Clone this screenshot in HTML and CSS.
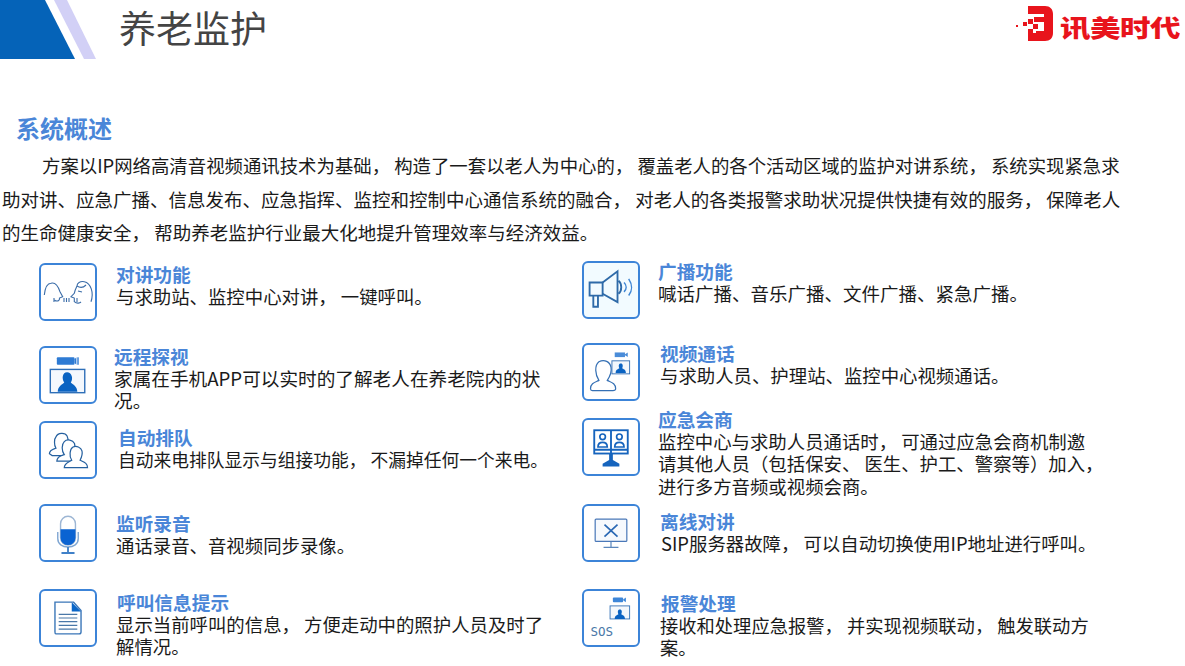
FILE: index.html
```html
<!DOCTYPE html>
<html lang="zh-CN">
<head>
<meta charset="utf-8">
<title>养老监护</title>
<link rel="stylesheet" href="styles.css">
</head>
<body>
<header class="top">
  <svg class="corner" viewBox="0 0 96 59" width="96" height="59"><polygon points="0,0 45,0 75,59 0,59" fill="#0563b8"/><polygon points="54,0 67,0 96,59 84,59" fill="#d2d0f6"/></svg>
  <h1 class="page-title">养老监护</h1>
  <div class="logo">
    <svg viewBox="0 0 38 36" width="38" height="36"><path d="M12 0H29C34 0 37 3 37 8V27C37 32 34 35 29 35H12V27H28V8H12Z" fill="#e8141c"/><path d="M18 11h10v5H18zM12 13h5v5h-5zM7 16h4v4H7zM17 18h5v5h-5zM12 23h5v4h-5zM20 25h8v3h-8zM0 19h2v2H0z" fill="#e8141c"/></svg>
    <span class="logo-text">讯美时代</span>
  </div>
</header>
<main>
  <h2 class="section-title">系统概述</h2>
  <p class="intro"><span class="intro-first">方案以IP网络高清音视频通讯技术为基础， 构造了一套以老人为中心的， 覆盖老人的各个活动区域的监护对讲系统， 系统实现紧急求</span><br>助对讲、应急广播、信息发布、应急指挥、监控和控制中心通信系统的融合， 对老人的各类报警求助状况提供快捷有效的服务， 保障老人<br>的生命健康安全， 帮助养老监护行业最大化地提升管理效率与经济效益。</p>
  <div class="features">
    <div class="col col-left">
      <div class="item i1">
        <div class="icon"><svg viewBox="0 0 54 54"><g fill="none" stroke="#3a6ca8" stroke-width="1.100"><path d="M3.300 30C4 24 6 18.300 10 18.300C14 17 17 21 19 26.700L21.700 31.700L18.500 33C19 36 16 37 13.300 35"/><path d="M13 37V33M23 37V33M25.500 37V33"/><path d="M50 36.700C53 28 50 18 43.300 16.700C39 16 36 18 36 21C34 25 33.500 27 33.300 28.300L30 31.700L33.300 33V36.700C36 39 39 38 40 37"/><path d="M36 21C39 23 42 23 45 20M37 26L41 27M28 37V33M36 37V33"/></g></svg></div>
        <div class="text"><h3>对讲功能</h3><p>与求助站、监控中心对讲， 一键呼叫。</p></div>
      </div>
      <div class="item i2">
        <div class="icon"><svg viewBox="0 0 58 58"><rect x="17" y="10" width="19" height="8" rx="1" fill="#2e7bd4"/><path d="M36 12L38 10V18L36 16Z" fill="#2e7bd4"/><rect x="39" y="10" width="1.500" height="8" fill="#2e7bd4"/><rect x="10" y="23" width="37" height="25" fill="#f4f8fd" stroke="#2e6fb8" stroke-width="1.500"/><path d="M18 47C18 41 23 39 25 37C22 33 23 26 28 26C33 26 35 33 32 37C34 39 39 41 39 47Z" fill="#0a63c2"/></svg></div>
        <div class="text"><h3>远程探视</h3><p>家属在手机APP可以实时的了解老人在养老院内的状<br>况。</p></div>
      </div>
      <div class="item i3">
        <div class="icon"><svg viewBox="0 0 58 58"><g fill="#fff" stroke="#25609f" stroke-width="1.300"><path d="M9 33C9 29 13 28 16 27C14 24 14 17 16 15C18 10 26 10 28 14C30 18 29 24 27 27L30 35H12Z"/><path d="M17 41C17 36 22 35 25 34C22 30 22 23 25 20C28 17 34 18 36 22C37 26 36 30 34 33L38 41Z"/><path d="M25 48C25 43 30 42 33 40C30 36 31 28 34 26C38 24 43 26 44 30C45 34 43 38 42 40C46 42 50 43 50 48Z"/></g></svg></div>
        <div class="text"><h3>自动排队</h3><p>自动来电排队显示与组接功能， 不漏掉任何一个来电。</p></div>
      </div>
      <div class="item i4">
        <div class="icon"><svg viewBox="0 0 58 58"><rect x="21" y="11" width="16" height="31" rx="8" fill="#fff" stroke="#9db6d4" stroke-width="1.500"/><path d="M21 25H37V34A8 8 0 0 1 21 34Z" fill="#0a63d2"/><path d="M18 28V35C18 41 23 44 29 44C35 44 40 41 40 35V28" fill="none" stroke="#7fa6d2" stroke-width="1.500"/><path d="M29 44V50M22 50.500H36" stroke="#3f80c8" stroke-width="2" fill="none"/></svg></div>
        <div class="text"><h3>监听录音</h3><p>通话录音、音视频同步录像。</p></div>
      </div>
      <div class="item i5">
        <div class="icon"><svg viewBox="0 0 58 58"><path d="M15 12H35L43 21V44C43 45 42 46 41 46H16C15 46 15 45 15 44Z" fill="#fff" stroke="#3a76b8" stroke-width="1.500"/><path d="M33 12L43 22H33Z" fill="#0a66c8"/><path d="M19 25H39M19 29H39M19 33H39M19 37H39M19 41H39" stroke="#4a78a8" stroke-width="1.300"/></svg></div>
        <div class="text"><h3>呼叫信息提示</h3><p>显示当前呼叫的信息， 方便走动中的照护人员及时了<br>解情况。</p></div>
      </div>
    </div>
    <div class="col col-right">
      <div class="item r1">
        <div class="icon tinted"><svg viewBox="0 0 58 58"><g fill="none" stroke="#2e6aa8" stroke-width="2"><path d="M6 21H20V35H6Z"/><path d="M20 21L36 9V42L20 33"/><path d="M10 35V47H15V35"/><path d="M37 19C41 22 41 30 37 33"/></g><g fill="none" stroke="#3f86d4" stroke-width="1.600"><path d="M43 21C46 24 46 28 43 31"/><path d="M48 17C52 23 52 30 48 35"/></g></svg></div>
        <div class="text"><h3>广播功能</h3><p>喊话广播、音乐广播、文件广播、紧急广播。</p></div>
      </div>
      <div class="item r2">
        <div class="icon"><svg viewBox="0 0 58 58"><path d="M7 47C7 41 12 40 16 38C12 32 11 22 16 18C22 15 28 18 29 24C30 29 27 35 25 38C29 40 34 41 34 47C34 49 33 49 31 49H9C8 49 7 49 7 47Z" fill="#fff" stroke="#3570b4" stroke-width="1.300"/><rect x="33" y="8" width="11" height="5" fill="#4a8cd8"/><path d="M44 10L47 8V13L44 11Z" fill="#4a8cd8"/><rect x="30" y="17" width="19" height="14" fill="#f2f7fc" stroke="#3570b4"/><path d="M34 30C34 26 37 26 38 25C37 23 37 20 39.500 20C42 20 42 23 41 25C42 26 45 26 45 30Z" fill="#0a63c2"/></svg></div>
        <div class="text"><h3>视频通话</h3><p>与求助人员、护理站、监控中心视频通话。</p></div>
      </div>
      <div class="item r3">
        <div class="icon"><svg viewBox="0 0 58 58"><rect x="11" y="11" width="36" height="25" fill="none" stroke="#1664bd" stroke-width="2"/><path d="M29 11V36M11 32H47" stroke="#1664bd" stroke-width="2"/><g fill="none" stroke="#1664bd" stroke-width="1.800"><circle cx="20" cy="18" r="3"/><circle cx="38" cy="18" r="3"/><path d="M15 29C15 25 17 24 20 24C23 24 25 25 25 29Z"/><path d="M33 29C33 25 35 24 38 24C41 24 43 25 43 29Z"/></g><path d="M27 36H31V43L38 47V50H20V47L27 43Z" fill="#1664bd"/></svg></div>
        <div class="text"><h3>应急会商</h3><p>监控中心与求助人员通话时， 可通过应急会商机制邀<br>请其他人员（包括保安、 医生、护工、警察等）加入，<br>进行多方音频或视频会商。</p></div>
      </div>
      <div class="item r4">
        <div class="icon"><svg viewBox="0 0 58 58"><rect x="12" y="14" width="34" height="24" rx="1" fill="#f6f9fd" stroke="#4a78b8" stroke-width="1.300"/><path d="M22 20L36 33M36 20L22 33" stroke="#2a68b4" stroke-width="1.800"/><path d="M29 38V44M21 44.500H37" stroke="#5a86bc" stroke-width="1.300"/></svg></div>
        <div class="text"><h3>离线对讲</h3><p>SIP服务器故障， 可以自动切换使用IP地址进行呼叫。</p></div>
      </div>
      <div class="item r5">
        <div class="icon"><svg viewBox="0 0 58 58"><rect x="31" y="7" width="11" height="5" rx="1" fill="#3d86d8"/><path d="M42 9L45 7V12L42 10Z" fill="#3d86d8"/><rect x="28" y="16" width="21" height="14" fill="#f4f8fc" stroke="#3a76b8"/><path d="M33 30C33 26 36 26 37 25C36 23 36 20 38.500 20C41 20 41 23 40 25C41 26 44 26 44 30Z" fill="#0a63c2"/><text x="7" y="48" class="sos">SOS</text></svg></div>
        <div class="text"><h3>报警处理</h3><p>接收和处理应急报警， 并实现视频联动， 触发联动方<br>案。</p></div>
      </div>
    </div>
  </div>
</main>
</body>
</html>
```
FILE: styles.css
```css
* { box-sizing: border-box; }
html, body { margin: 0; padding: 0; }
body {
  width: 1185px;
  height: 666px;
  overflow: hidden;
  background: #fff;
  color: #1a1a1a;
  font-family: "Noto Sans CJK SC", "Noto Sans", sans-serif;
}
.top { display: flex; align-items: flex-start; height: 59px; }
.corner { display: block; flex: none; }
.page-title {
  margin: 0 0 0 23px;
  font-size: 37px;
  line-height: 54px;
  font-weight: 400;
  color: #444;
}
.logo {
  margin-left: auto;
  margin-right: 5px;
  margin-top: 6px;
  display: flex;
  align-items: flex-start;
  gap: 6px;
}
.logo svg { display: block; }
.logo-text {
  margin-top: 3px;
  color: #e8141c;
  font-size: 30.500px;
  line-height: 36px;
  font-weight: 900;
  letter-spacing: -0.500px;
  transform: scaleY(0.78);
}
.section-title {
  margin: 53px 0 0 16px;
  font-size: 24px;
  line-height: 32px;
  font-weight: 700;
  color: #4a86d8;
}
.intro {
  margin: 5px 0 0 2px;
  font-size: 18.500px;
  line-height: 33.500px;
  text-indent: 40px;
  white-space: nowrap;
}
.intro-first { font-size: 18.400px; }
.features { display: flex; margin-top: 0; }
.col { display: flex; flex-direction: column; flex: none; }
.col-left { width: 582px; padding-left: 39px; padding-top: 13px; }
.col-right { padding-top: 11px; }
.item { display: flex; height: 58px; flex: none; }
.icon {
  flex: none;
  width: 58px;
  height: 58px;
  border: 2px solid #3c84d8;
  border-radius: 6px;
  background: #fff;
}
.icon.tinted { background: #f2fbff; }
.icon svg { display: block; width: 54px; height: 54px; }
.sos { font-family: "DejaVu Sans Mono", monospace; font-size: 13.500px; fill: #4a78a8; }
.text { white-space: nowrap; }
.text h3 {
  margin: 0;
  font-size: 18.700px;
  line-height: 22px;
  font-weight: 700;
  color: #4a86d8;
}
.text p { margin: 0; font-size: 18.400px; line-height: 22.500px; }

.i2 { margin-top: 25px; height: 59px; }
.i3 { margin-top: 16px; }
.i4 { margin-top: 25px; }
.i5 { margin-top: 27px; }
.r2 { margin-top: 24px; }
.r3 { margin-top: 17px; }
.r4 { margin-top: 28px; }
.r5 { margin-top: 27px; }

.i1 .text { margin: 0 0 0 19px; }
.i2 .text { margin: -1px 0 0 17px; }
.i2 p { font-size: 18.650px; }
.i3 .text { margin: 5px 0 0 21px; }
.i3 p { font-size: 17.750px; }
.i4 .text { margin: 8px 0 0 19px; }
.i5 .text { margin: 2px 0 0 19px; }
.i5 h3 { margin-left: 1px; }
.r1 .text { margin: -1px 0 0 18px; }
.r1 p { font-size: 18.500px; }
.r2 .text { margin: -1px 0 0 20px; }
.r3 .text { margin: -10px 0 0 18px; }
.r4 .text { margin: 6px 0 0 21px; }
.r4 h3 { margin-left: -1px; }
.r5 .text { margin: 3px 0 0 20px; }
.r5 h3 { margin-left: 1px; }
.r5 p { font-size: 18.300px; }
```
